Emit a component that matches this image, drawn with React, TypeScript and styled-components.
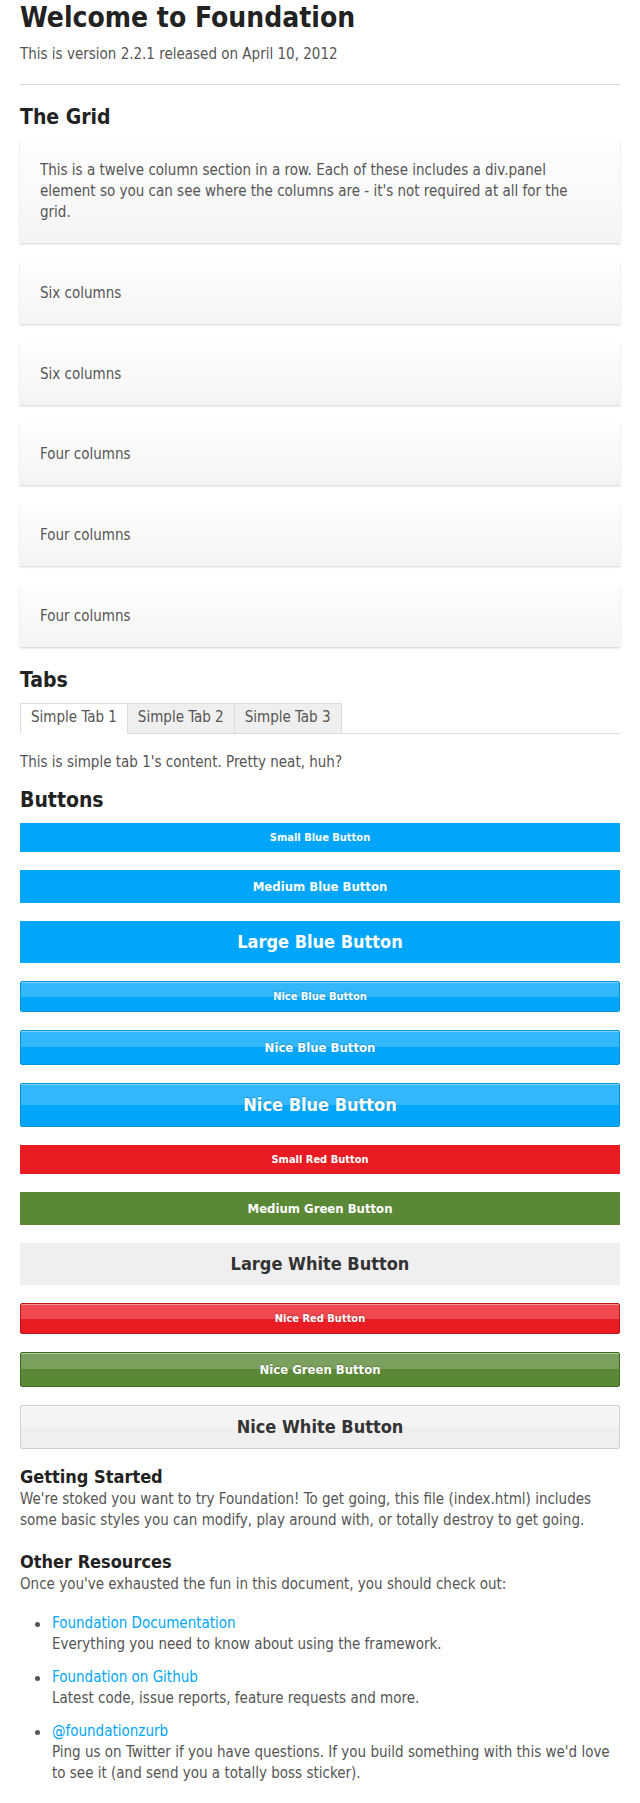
import React from "react";
import styled, { createGlobalStyle, css } from "styled-components";

type Tone = "blue" | "red" | "green" | "white";
type Size = "small" | "medium" | "large";

const tones: Record<Tone, { bg: string; border: string; text: string; shine: string }> = {
    blue: { bg: "#00a6fc", border: "#0593dc", text: "#fff", shine: "rgba(255,255,255,0.2)" },
    red: { bg: "#e91c23", border: "#b8141a", text: "#fff", shine: "rgba(255,255,255,0.2)" },
    green: { bg: "#5b8836", border: "#3f6a1f", text: "#fff", shine: "rgba(255,255,255,0.2)" },
    white: { bg: "#efefef", border: "#d0d0d0", text: "#333", shine: "rgba(255,255,255,0.35)" },
};

const sizes: Record<Size, { font: number; pad: number }> = {
    small: { font: 11, pad: 9 },
    medium: { font: 13, pad: 10 },
    large: { font: 18, pad: 12 },
};

const GlobalStyle = createGlobalStyle`
  html, body {
    margin: 0;
    padding: 0;
    background: #fff;
  }

  body {
    font-family: "DejaVu Sans Condensed", "DejaVu Sans", sans-serif;
    font-size: 15px;
    line-height: 21px;
    color: #555;
  }
`;

const Page = styled.div`
  padding: 0 20px 20px;
`;

const Title = styled.h2`
  margin: 0 0 8px;
  font-size: 28px;
  line-height: 36px;
  font-weight: bold;
  color: #222;
`;

const Text = styled.p`
  margin: 0;
`;

const Subtitle = styled(Text)`
  margin-bottom: 19px;
`;

const Rule = styled.hr`
  border: 0;
  border-top: 1px solid #ddd;
  height: 0;
  margin: 0 0 19px;
`;

const SectionTitle = styled.h3`
  margin: 0 0 9px;
  font-size: 21px;
  line-height: 27px;
  font-weight: bold;
  color: #222;
`;

const SideTitle = styled.h4<{ $first?: boolean }>`
  margin: ${p => (p.$first ? "16px" : "19px")} 0 1px;
  font-size: 18px;
  line-height: 23px;
  font-weight: bold;
  color: #222;
`;

const Panel = styled.div`
  padding: 20px;
  margin-bottom: 19.75px;
  background: linear-gradient(to bottom, #fefefe 0%, #f4f4f4 100%);
  box-shadow: 0 1px 2px rgba(0, 0, 0, 0.18);
`;

const TabBar = styled.div`
  display: flex;
  border-bottom: 1px solid #ddd;
`;

const Tab = styled.div<{ $active?: boolean }>`
  padding: 3px 10px 5px;
  border: 1px solid #ddd;
  border-bottom: none;
  margin-left: -1px;
  background: ${p => (p.$active ? "#fff" : "#efefef")};
  color: #555;

  &:first-child {
    margin-left: 0;
  }

  ${p => p.$active && css`
    padding-bottom: 6px;
    margin-bottom: -1px;
  `}
`;

const TabContent = styled(Text)`
  margin: 18px 0 14px;
`;

const ButtonStack = styled.div`
  display: flex;
  flex-direction: column;
  gap: 18px;
`;

const Button = styled.a<{ $tone: Tone; $size: Size; $nice?: boolean }>`
  display: block;
  text-align: center;
  font-weight: bold;
  line-height: 1;
  font-size: ${p => sizes[p.$size].font}px;
  padding: ${p => sizes[p.$size].pad}px 0;
  background-color: ${p => tones[p.$tone].bg};
  color: ${p => tones[p.$tone].text};
  cursor: pointer;

  ${p => p.$nice && css`
    border: 1px solid ${tones[p.$tone].border};
    border-radius: 2px;
    background-image: linear-gradient(to bottom, ${tones[p.$tone].shine} 50%, rgba(255, 255, 255, 0) 50%);
    box-shadow: inset 0 1px 0 rgba(255, 255, 255, 0.4);
    text-shadow: ${p.$tone === "white" ? "none" : "0 -1px 1px rgba(0, 0, 0, 0.2)"};
  `}
`;

const ResourceList = styled.ul`
  list-style: none;
  margin: 18px 0 0;
  padding: 0;
`;

const ResourceItem = styled.li`
  display: flex;
  margin-bottom: 12px;
`;

const Bullet = styled.span`
  flex: 0 0 30px;
  display: flex;
  justify-content: center;
  padding-top: 9px;
  padding-left: 2px;
  height: 5px;

  &::before {
    content: "";
    width: 5px;
    height: 5px;
    border-radius: 50%;
    background: #555;
  }
`;

const ResourceBody = styled.div`
  flex: 1;
`;

const Link = styled.a`
  color: #00a6fc;
  text-decoration: none;
`;

const panels = ["Six columns", "Six columns", "Four columns", "Four columns", "Four columns"];

const buttons: { label: string; tone: Tone; size: Size; nice?: boolean }[] = [
    { label: "Small Blue Button", tone: "blue", size: "small" },
    { label: "Medium Blue Button", tone: "blue", size: "medium" },
    { label: "Large Blue Button", tone: "blue", size: "large" },
    { label: "Nice Blue Button", tone: "blue", size: "small", nice: true },
    { label: "Nice Blue Button", tone: "blue", size: "medium", nice: true },
    { label: "Nice Blue Button", tone: "blue", size: "large", nice: true },
    { label: "Small Red Button", tone: "red", size: "small" },
    { label: "Medium Green Button", tone: "green", size: "medium" },
    { label: "Large White Button", tone: "white", size: "large" },
    { label: "Nice Red Button", tone: "red", size: "small", nice: true },
    { label: "Nice Green Button", tone: "green", size: "medium", nice: true },
    { label: "Nice White Button", tone: "white", size: "large", nice: true },
];

const resources = [
    { title: "Foundation Documentation", text: "Everything you need to know about using the framework." },
    { title: "Foundation on Github", text: "Latest code, issue reports, feature requests and more." },
    {
        title: "@foundationzurb",
        text: "Ping us on Twitter if you have questions. If you build something with this we'd love to see it (and send you a totally boss sticker).",
    },
];

const App = () => {
    return (
        <Page>
            <GlobalStyle/>
            <Title>Welcome to Foundation</Title>
            <Subtitle>This is version 2.2.1 released on April 10, 2012</Subtitle>
            <Rule/>

            <SectionTitle>The Grid</SectionTitle>
            <Panel>
                <Text>
                    This is a twelve column section in a row. Each of these includes a div.panel element so you can
                    see where the columns are - it's not required at all for the grid.
                </Text>
            </Panel>
            {panels.map((label, index) => (
                <Panel key={index}>
                    <Text>{label}</Text>
                </Panel>
            ))}

            <SectionTitle>Tabs</SectionTitle>
            <TabBar>
                <Tab $active>Simple Tab 1</Tab>
                <Tab>Simple Tab 2</Tab>
                <Tab>Simple Tab 3</Tab>
            </TabBar>
            <TabContent>This is simple tab 1's content. Pretty neat, huh?</TabContent>

            <SectionTitle>Buttons</SectionTitle>
            <ButtonStack>
                {buttons.map((b, index) => (
                    <Button key={index} $tone={b.tone} $size={b.size} $nice={b.nice}>{b.label}</Button>
                ))}
            </ButtonStack>

            <SideTitle $first>Getting Started</SideTitle>
            <Text>
                We're stoked you want to try Foundation! To get going, this file (index.html) includes some basic
                styles you can modify, play around with, or totally destroy to get going.
            </Text>

            <SideTitle>Other Resources</SideTitle>
            <Text>Once you've exhausted the fun in this document, you should check out:</Text>
            <ResourceList>
                {resources.map(r => (
                    <ResourceItem key={r.title}>
                        <Bullet/>
                        <ResourceBody>
                            <Link href="#">{r.title}</Link>
                            <br/>
                            {r.text}
                        </ResourceBody>
                    </ResourceItem>
                ))}
            </ResourceList>
        </Page>
    );
};

export default App;
